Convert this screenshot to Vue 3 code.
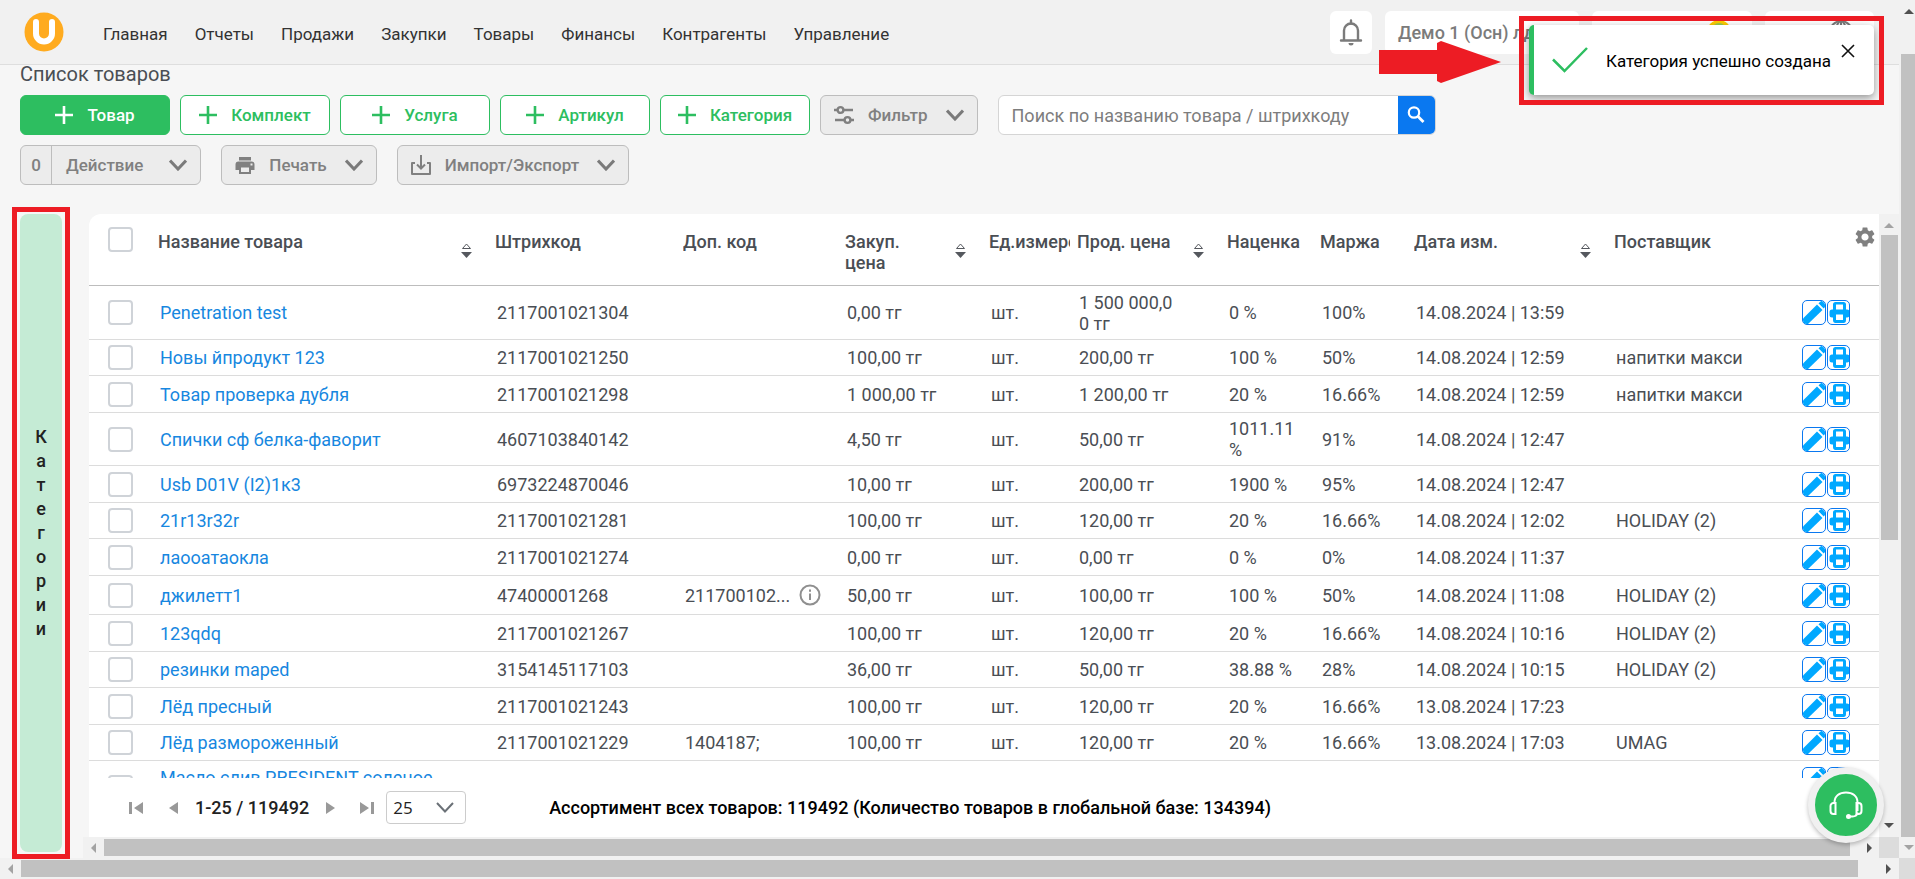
<script setup>
import { ref } from 'vue'

const menu = ['Главная', 'Отчеты', 'Продажи', 'Закупки', 'Товары', 'Финансы', 'Контрагенты', 'Управление']
const addButtons = ['Товар', 'Комплект', 'Услуга', 'Артикул', 'Категория']
const sideLetters = 'Категории'.split('')
const pageSize = ref('25')
const search = ref('')

const columns = [
  { key: 'name', label: 'Название товара', sort: true },
  { key: 'barcode', label: 'Штрихкод' },
  { key: 'extra', label: 'Доп. код' },
  { key: 'buy', label: 'Закуп. цена', sort: true },
  { key: 'unit', label: 'Ед.измере' },
  { key: 'sell', label: 'Прод. цена', sort: true },
  { key: 'markup', label: 'Наценка' },
  { key: 'margin', label: 'Маржа' },
  { key: 'date', label: 'Дата изм.', sort: true },
  { key: 'supplier', label: 'Поставщик' },
]

const fields = ['name', 'barcode', 'extra', 'buy', 'unit', 'sell', 'markup', 'margin', 'date', 'supplier']
const rows = [
  ['Penetration test', '2117001021304', '', '0,00 тг', 'шт.', '1 500 000,0\n0 тг', '0 %', '100%', '14.08.2024 | 13:59', ''],
  ['Новы йпродукт 123', '2117001021250', '', '100,00 тг', 'шт.', '200,00 тг', '100 %', '50%', '14.08.2024 | 12:59', 'напитки макси'],
  ['Товар проверка дубля', '2117001021298', '', '1 000,00 тг', 'шт.', '1 200,00 тг', '20 %', '16.66%', '14.08.2024 | 12:59', 'напитки макси'],
  ['Спички сф белка-фаворит', '4607103840142', '', '4,50 тг', 'шт.', '50,00 тг', '1011.11\n%', '91%', '14.08.2024 | 12:47', ''],
  ['Usb D01V (I2)1к3', '6973224870046', '', '10,00 тг', 'шт.', '200,00 тг', '1900 %', '95%', '14.08.2024 | 12:47', ''],
  ['21r13r32r', '2117001021281', '', '100,00 тг', 'шт.', '120,00 тг', '20 %', '16.66%', '14.08.2024 | 12:02', 'HOLIDAY (2)'],
  ['лаооатаокла', '2117001021274', '', '0,00 тг', 'шт.', '0,00 тг', '0 %', '0%', '14.08.2024 | 11:37', ''],
  ['джилетт1', '47400001268', '211700102...', '50,00 тг', 'шт.', '100,00 тг', '100 %', '50%', '14.08.2024 | 11:08', 'HOLIDAY (2)'],
  ['123qdq', '2117001021267', '', '100,00 тг', 'шт.', '120,00 тг', '20 %', '16.66%', '14.08.2024 | 10:16', 'HOLIDAY (2)'],
  ['резинки maped', '3154145117103', '', '36,00 тг', 'шт.', '50,00 тг', '38.88 %', '28%', '14.08.2024 | 10:15', 'HOLIDAY (2)'],
  ['Лёд пресный', '2117001021243', '', '100,00 тг', 'шт.', '120,00 тг', '20 %', '16.66%', '13.08.2024 | 17:23', ''],
  ['Лёд размороженный', '2117001021229', '1404187;', '100,00 тг', 'шт.', '120,00 тг', '20 %', '16.66%', '13.08.2024 | 17:03', 'UMAG'],
  ['Масло слив PRESIDENT соленое', '', '', '', '', '', '', '', '', ''],
].map((cells) => Object.fromEntries(cells.map((cell, i) => [fields[i], cell])))
</script>

<template>
  <div class="window">
    <div class="page">
      <header class="topbar">
        <a class="logo" href="#" aria-label="Главная страница">
          <svg viewBox="0 0 40 40" width="40" height="40">
            <circle cx="20" cy="20" r="19.5" fill="#ffab1f" />
            <path d="M12 10v11.500a8 8 0 0 0 16 0V10" fill="none" stroke="#fff" stroke-width="6" stroke-linecap="round" />
          </svg>
        </a>
        <nav class="menu">
          <a v-for="item in menu" :key="item" href="#">{{ item }}</a>
        </nav>
        <div class="account">
          <button class="pill bell" aria-label="Уведомления">
            <svg viewBox="0 0 24 28" width="24" height="28" fill="none" stroke="#7b7b7b" stroke-width="2.400">
              <path d="M5 22V12.500a7 7 0 0 1 14 0V22" />
              <path d="M2 22.500h20M12 5.500V2.500" stroke-linecap="round" />
              <path d="M9.500 25h5a2.500 2.500 0 0 1-5 0z" fill="#7b7b7b" stroke="none" />
            </svg>
          </button>
          <button class="pill shop">Демо 1 (Осн) лд</button>
          <button class="pill plan">
            <span>П</span>
            <svg viewBox="0 0 24 24" width="24" height="24">
              <circle cx="12" cy="12" r="12" fill="#ffcc00" />
              <circle cx="12" cy="10" r="7" fill="#9ccc4f" />
            </svg>
          </button>
          <button class="pill lang">
            <span>RU</span>
            <svg viewBox="0 0 24 24" width="24" height="24" fill="none" stroke="#7b7b7b" stroke-width="2">
              <circle cx="12" cy="12" r="11" />
              <ellipse cx="12" cy="12" rx="5" ry="11" />
              <path d="M1 12h22M12 1v22" />
            </svg>
          </button>
        </div>
      </header>

      <h1>Список товаров</h1>

      <div class="toolbar">
        <button v-for="(label, i) in addButtons" :key="label" class="add" :class="{ primary: i === 0 }">
          <svg viewBox="0 0 18 18" width="18" height="18" stroke="currentColor" stroke-width="2.600">
            <path d="M9 0v18M0 9h18" />
          </svg>
          {{ label }}
        </button>
        <button class="tool filter">
          <svg viewBox="0 0 20 20" width="20" height="20" fill="none" stroke="currentColor" stroke-width="2.400">
            <circle cx="6.500" cy="5" r="2.900" />
            <circle cx="13.500" cy="15" r="2.900" />
            <path d="M0 5h3.500M9.500 5H19M1 15h9.500M16.500 15H20" />
          </svg>
          <span>Фильтр</span>
          <svg class="chevron" viewBox="0 0 18 12" width="18" height="12"><path d="M1 1.500l8 8.500 8-8.500" /></svg>
        </button>
        <form class="search" @submit.prevent>
          <input v-model="search" type="text" aria-label="Поиск товара" placeholder="Поиск по названию товара / штрихкоду" />
          <button aria-label="Найти">
            <svg viewBox="0 0 20 20" width="20" height="20" fill="none" stroke="#fff">
              <circle cx="8" cy="7.500" r="5.200" stroke-width="2.200" />
              <path d="M11.800 11.300l5.700 5.700" stroke-width="2.800" />
            </svg>
          </button>
        </form>
      </div>

      <div class="toolbar second">
        <button class="tool action">
          <span class="count">0</span>
          <span>Действие</span>
          <svg class="chevron" viewBox="0 0 18 12" width="18" height="12"><path d="M1 1.500l8 8.500 8-8.500" /></svg>
        </button>
        <button class="tool">
          <svg viewBox="0 0 20 18" width="20" height="18" fill="currentColor">
            <path d="M4 1h12v3.500H4z" />
            <path fill-rule="evenodd" d="M3.500 5.500h13A3 3 0 0 1 19.500 8.500V14H16v4H4v-4H.500V8.500a3 3 0 0 1 3-3zM6 11.500V16h8v-4.500zM15.500 7.500v2h2v-2z" />
          </svg>
          <span>Печать</span>
          <svg class="chevron" viewBox="0 0 18 12" width="18" height="12"><path d="M1 1.500l8 8.500 8-8.500" /></svg>
        </button>
        <button class="tool">
          <svg viewBox="0 0 20 20" width="20" height="20" fill="none" stroke="currentColor" stroke-width="2">
            <path d="M4 8H1v11h18V8h-3" stroke-linejoin="round" />
            <path d="M10 0v13M6 9.500l4 4 4-4" />
          </svg>
          <span>Импорт/Экспорт</span>
          <svg class="chevron" viewBox="0 0 18 12" width="18" height="12"><path d="M1 1.500l8 8.500 8-8.500" /></svg>
        </button>
      </div>

      <main class="workspace">
        <button class="categories" aria-label="Категории">
          <span v-for="(letter, i) in sideLetters" :key="i">{{ letter }}</span>
          <i class="mark"></i>
        </button>

        <section class="list">
          <div class="card">
            <div class="rows">
              <table>
                <colgroup>
                  <col class="c-check" /><col class="c-name" /><col class="c-barcode" /><col class="c-extra" />
                  <col class="c-buy" /><col class="c-unit" /><col class="c-sell" /><col class="c-markup" />
                  <col class="c-margin" /><col class="c-date" /><col class="c-supplier" /><col />
                </colgroup>
                <thead>
                  <tr>
                    <th class="check"><input type="checkbox" aria-label="Выбрать все" /></th>
                    <th v-for="col in columns" :key="col.key">
                      <div class="head" :class="{ sortable: col.sort }">
                        <span>{{ col.label }}</span>
                        <button v-if="col.sort" class="sort" aria-label="Сортировать">
                          <svg viewBox="0 0 11 15" width="11" height="15">
                            <path d="M1.500 5.500L5.500 1l4 4.500z" fill="none" stroke="#55585e" />
                            <path d="M0 9h11l-5.500 6z" fill="#55585e" />
                          </svg>
                        </button>
                      </div>
                    </th>
                    <th class="settings">
                      <button aria-label="Настройка столбцов">
                        <svg viewBox="2 2 20 20" width="20" height="20" fill="#808080">
                          <path d="M19.140 12.940c.04-.3.060-.61.060-.94 0-.32-.02-.64-.07-.94l2.030-1.580a.49.490 0 0 0 .12-.61l-1.920-3.320a.488.488 0 0 0-.59-.22l-2.390.96c-.5-.38-1.030-.7-1.620-.94l-.36-2.540a.484.484 0 0 0-.48-.41h-3.840c-.24 0-.43.17-.47.410l-.36 2.540c-.59.240-1.130.57-1.620.94l-2.390-.96c-.22-.08-.47 0-.59.220L2.740 8.870c-.12.210-.08.470.12.610l2.030 1.580c-.05.300-.09.630-.09.940s.020.640.070.940l-2.030 1.580a.49.490 0 0 0-.12.610l1.920 3.320c.12.220.370.290.590.220l2.390-.96c.5.380 1.030.7 1.620.940l.36 2.540c.05.240.240.410.480.410h3.840c.24 0 .44-.17.470-.41l.36-2.540c.59-.24 1.130-.56 1.620-.94l2.390.96c.22.080.47 0 .59-.22l1.920-3.320c.12-.22.070-.47-.12-.61l-2.010-1.580zM12 15.600c-1.980 0-3.600-1.620-3.600-3.600s1.620-3.600 3.600-3.600 3.600 1.620 3.600 3.600-1.620 3.600-3.600 3.600z" />
                        </svg>
                      </button>
                    </th>
                  </tr>
                </thead>
                <tbody>
                  <tr v-for="row in rows" :key="row.name">
                    <td class="check"><input type="checkbox" :aria-label="row.name" /></td>
                    <td><a href="#">{{ row.name }}</a></td>
                    <td>{{ row.barcode }}</td>
                    <td>
                      <span v-if="row.extra.endsWith('...')" class="more">
                        {{ row.extra }}
                        <button aria-label="Подробнее">
                          <svg viewBox="0 0 22 22" width="22" height="22" fill="none" stroke="#8f8f8f" stroke-width="2">
                            <circle cx="11" cy="11" r="9.500" />
                            <path d="M11 9.500v6.500M11 5.500v2.300" />
                          </svg>
                        </button>
                      </span>
                      <template v-else>{{ row.extra }}</template>
                    </td>
                    <td>{{ row.buy }}</td>
                    <td>{{ row.unit }}</td>
                    <td class="wrap">{{ row.sell }}</td>
                    <td class="wrap">{{ row.markup }}</td>
                    <td>{{ row.margin }}</td>
                    <td>{{ row.date }}</td>
                    <td>{{ row.supplier }}</td>
                    <td class="actions">
                      <div>
                        <button aria-label="Редактировать">
                          <svg viewBox="0 0 23 23" width="23" height="23" fill="#00a8ff">
                            <path d="M14 3.500l5.500 5.500L5 23H0v-5.500z" />
                            <path d="M15.500 2.200L17.600.400a1.500 1.500 0 0 1 2.100 0L22.600 3.300a1.500 1.500 0 0 1 0 2.100l-1.900 2z" />
                          </svg>
                        </button>
                        <button aria-label="Печать ценника">
                          <svg viewBox="0 0 23 23" width="23" height="23" fill="#00a8ff">
                            <path fill-rule="evenodd" d="M5 8.500V3.500Q5 1 7.500 1h8Q18 1 18 3.500v5h1Q21.500 8.500 21.500 11v3q0 2.500-2.500 2.500h-1V19q0 3-2.500 3h-8Q5 22 5 19v-2.500H4Q1.500 16.500 1.500 14v-3Q1.500 8.500 4 8.500zM8 3.500v5h7v-5zM8 13.500V19h7v-5.500z" />
                          </svg>
                        </button>
                      </div>
                    </td>
                  </tr>
                </tbody>
              </table>
            </div>

            <footer class="pager">
              <button aria-label="Первая страница">
                <svg viewBox="0 0 14 12" width="14" height="12"><path d="M0 0h3v12H0zM14 0v12L5 6z" /></svg>
              </button>
              <button class="prev" aria-label="Предыдущая страница">
                <svg viewBox="0 0 9 12" width="9" height="12"><path d="M9 0v12L0 6z" /></svg>
              </button>
              <strong>1-25 / 119492</strong>
              <button class="next" aria-label="Следующая страница">
                <svg viewBox="0 0 9 12" width="9" height="12"><path d="M0 0v12L9 6z" /></svg>
              </button>
              <button class="last" aria-label="Последняя страница">
                <svg viewBox="0 0 14 12" width="14" height="12"><path d="M11 0h3v12h-3zM0 0v12L9 6z" /></svg>
              </button>
              <div class="size">
                <select v-model="pageSize" aria-label="Строк на странице">
                  <option>25</option>
                  <option>50</option>
                </select>
                <svg viewBox="0 0 18 11" width="18" height="11" fill="none" stroke="#6b7177" stroke-width="2"><path d="M1 1l8 8.500L17 1" /></svg>
              </div>
              <p>Ассортимент всех товаров: 119492 (Количество товаров в глобальной базе: 134394)</p>
            </footer>
          </div>

          <div class="track vertical list-v">
            <svg class="arrow dim" viewBox="0 0 10 5" width="10" height="5"><path d="M0 5l5-5 5 5z" /></svg>
            <div class="thumb"></div>
            <svg class="arrow" viewBox="0 0 10 5" width="10" height="5"><path d="M0 0l5 5 5-5z" /></svg>
          </div>
          <div class="track horizontal list-h">
            <svg class="arrow dim" viewBox="0 0 5 10" width="5" height="10"><path d="M5 0L0 5l5 5z" /></svg>
            <div class="thumb"></div>
            <svg class="arrow" viewBox="0 0 5 10" width="5" height="10"><path d="M0 0l5 5-5 5z" /></svg>
          </div>
          <div class="corner"></div>
        </section>
      </main>
    </div>

    <div class="track vertical page-v">
      <svg class="arrow" viewBox="0 0 10 5" width="10" height="5"><path d="M0 5l5-5 5 5z" /></svg>
      <div class="thumb"></div>
      <svg class="arrow dim" viewBox="0 0 10 5" width="10" height="5"><path d="M0 0l5 5 5-5z" /></svg>
    </div>
    <div class="track horizontal page-h">
      <svg class="arrow dim" viewBox="0 0 5 10" width="5" height="10"><path d="M5 0L0 5l5 5z" /></svg>
      <div class="thumb"></div>
      <svg class="arrow" viewBox="0 0 5 10" width="5" height="10"><path d="M0 0l5 5-5 5z" /></svg>
    </div>
    <div class="corner"></div>

    <div class="toast" role="status">
      <svg viewBox="0 0 36 26" width="36" height="26" fill="none" stroke="#2dbe60" stroke-width="2.500"><path d="M1 12.500L12.500 24 35 1" /></svg>
      <span>Категория успешно создана</span>
      <button aria-label="Закрыть">
        <svg viewBox="0 0 14 14" width="14" height="14" stroke="#111" stroke-width="1.600"><path d="M1 1l12 12M13 1L1 13" /></svg>
      </button>
      <i class="mark"></i>
    </div>
    <svg class="pointer" viewBox="0 0 122 42" width="122" height="42"><path d="M0 9h58V2l4-2 60 21-60 21-4-2v-7H0z" fill="#ed1c24" /></svg>

    <button class="support" aria-label="Поддержка">
      <svg viewBox="0 0 34 28" width="34" height="28" fill="none" stroke="#fff" stroke-width="2">
        <path d="M5.500 12V11.500C5.500 5 10.500 1.500 17 1.500S28.500 5 28.500 11.500V20" />
        <path d="M6.500 12v11H4.500A3 3 0 0 1 1.500 20v-5a3 3 0 0 1 3-3zM27.500 12v11h2a3 3 0 0 0 3-3v-5a3 3 0 0 0-3-3z" />
        <path d="M28.500 21.500q-.5 4-5 4H20" />
        <circle cx="19.500" cy="25.500" r="1.500" fill="#fff" />
      </svg>
    </button>
  </div>
</template>

<style>
body {
  margin: 0;
}
</style>

<style scoped>
.window {
  position: relative;
  display: grid;
  grid-template-columns: minmax(0, 1fr) 16px;
  grid-template-rows: minmax(0, 1fr) 21px;
  height: 100vh;
  overflow: hidden;
  background: #f6f6f6;
  font-family: Roboto, 'Liberation Sans', sans-serif;
  font-size: 18px;
  line-height: 21px;
  color: #4a4e54;
}

button,
input,
select {
  font: inherit;
  color: inherit;
}

button {
  margin: 0;
  padding: 0;
  border: 0;
  background: none;
}

svg {
  display: block;
  flex: none;
}

a {
  text-decoration: none;
}

.page {
  display: flex;
  flex-direction: column;
  min-width: 0;
  min-height: 0;
}

.topbar {
  display: flex;
  flex: none;
  align-items: center;
  box-sizing: border-box;
  height: 65px;
  padding: 0 25px 0 24px;
  border-bottom: 1px solid #dedede;
  background: #f1f1f1;
}

.menu {
  display: flex;
  flex: 1;
  gap: 27px;
  margin-left: 39px;
  padding-top: 4px;
  font-size: 17px;
}

.menu a {
  color: #333;
}

.account {
  display: flex;
  gap: 13px;
}

.pill {
  display: flex;
  align-items: center;
  height: 43px;
  border-radius: 6px;
  background: #fff;
  color: #7b7b7b;
  font-weight: 500;
  white-space: nowrap;
}

.bell {
  justify-content: center;
  width: 42px;
}

.shop {
  width: 194px;
  padding-left: 13px;
}

.plan {
  gap: 79px;
  width: 160px;
  padding-left: 23px;
}

.lang {
  gap: 18px;
  width: 109px;
  padding-left: 23px;
}

h1 {
  flex: none;
  margin: -6px 0 0;
  padding: 0 20px;
  font-size: 20px;
  font-weight: 400;
  line-height: 30px;
}

.toolbar {
  display: flex;
  flex: none;
  gap: 10px;
  margin-top: 6px;
  padding: 0 20px;
}

.toolbar.second {
  gap: 20px;
  margin-top: 10px;
}

.add {
  display: flex;
  align-items: center;
  justify-content: center;
  gap: 14px;
  box-sizing: border-box;
  width: 150px;
  height: 40px;
  border: 1px solid #2dbe60;
  border-radius: 6px;
  background: #fff;
  color: #2dbe60;
  font-size: 17px;
  font-weight: 500;
}

.add.primary {
  background: #2dbe60;
  color: #fff;
}

.tool {
  display: flex;
  align-items: center;
  gap: 14px;
  box-sizing: border-box;
  height: 40px;
  padding: 0 13px;
  border: 1px solid #bdbdbd;
  border-radius: 6px;
  background: #ececec;
  color: #808080;
  font-size: 17px;
  font-weight: 500;
}

.tool .chevron {
  margin-left: 4px;
}

.tool.action {
  padding-left: 0;
}

.tool.action .chevron {
  margin-left: 12px;
}

.chevron {
  fill: none;
  stroke: #7a7a7a;
  stroke-width: 3;
}

.count {
  align-self: stretch;
  width: 30px;
  border-right: 1px solid #bdbdbd;
  line-height: 38px;
  text-align: center;
}

.search {
  display: flex;
  box-sizing: border-box;
  width: 438px;
  height: 40px;
  margin-left: 10px;
  border: 1px solid #d5d5d5;
  border-radius: 6px;
  background: #fff;
  overflow: hidden;
}

.search input {
  flex: 1;
  min-width: 0;
  padding: 1px 13px 0;
  border: 0;
  background: none;
  outline: none;
}

.search input::placeholder {
  color: #7d7d7d;
  opacity: 1;
}

.search button {
  display: flex;
  align-items: center;
  justify-content: center;
  width: 37px;
  background: #0a78f0;
}

.workspace {
  display: flex;
  flex: 1;
  gap: 21px;
  min-height: 0;
  margin-top: 29px;
  padding-left: 20px;
}

.categories {
  position: relative;
  display: flex;
  flex: none;
  flex-direction: column;
  align-items: center;
  justify-content: center;
  width: 42px;
  margin-bottom: 6px;
  border-radius: 8px;
  background: #c5ebd5;
  color: #222;
  font-weight: 500;
  line-height: 24px;
}

.mark {
  position: absolute;
  border: 5px solid #ed1c24;
  pointer-events: none;
}

.categories .mark {
  inset: -7px -8px;
}

.list {
  display: grid;
  flex: 1;
  grid-template-columns: minmax(0, 1fr) 20px;
  grid-template-rows: minmax(0, 1fr) 21px;
  min-width: 0;
}

.card {
  display: flex;
  flex-direction: column;
  min-height: 0;
  margin-left: 6px;
  border-top-left-radius: 12px;
  background: #fff;
  overflow: hidden;
}

.rows {
  flex: 1;
  min-height: 0;
  overflow: hidden;
}

table {
  width: 100%;
  table-layout: fixed;
  border-collapse: separate;
  border-spacing: 0;
}

.c-check { width: 66px; }
.c-name { width: 337px; }
.c-barcode { width: 188px; }
.c-extra { width: 162px; }
.c-buy { width: 144px; }
.c-unit { width: 88px; }
.c-sell { width: 150px; }
.c-markup { width: 93px; }
.c-margin { width: 94px; }
.c-date { width: 200px; }
.c-supplier { width: 186px; }

th {
  box-sizing: border-box;
  height: 72px;
  padding: 17px 4px 0 3px;
  border-bottom: 1px solid #bdbdbd;
  font-weight: 500;
  text-align: left;
  vertical-align: top;
}

.head {
  display: flex;
  justify-content: space-between;
  overflow: hidden;
}

.head.sortable {
  padding-right: 16px;
}

.head.sortable span {
  max-width: calc(100% - 26px);
}

.sort {
  margin-top: 12px;
  align-self: flex-start;
}

.settings {
  padding: 13px 4px 0 0;
}

.settings button {
  display: block;
  margin-left: auto;
}

td {
  box-sizing: border-box;
  height: 37px;
  padding: 0 0 0 5px;
  border-bottom: 1px solid #dcdcdc;
  vertical-align: middle;
  white-space: nowrap;
}

tbody tr:nth-child(even) td {
  height: 36px;
}

tbody tr:first-child td {
  height: 54px;
}

td.wrap {
  padding-top: 5px;
  padding-bottom: 5px;
  white-space: pre-line;
}

tbody tr:last-child td {
  height: 53px;
  padding-bottom: 16px;
}

tbody tr:last-child td:nth-child(2) {
  padding-bottom: 20px;
}

td a {
  color: #1787e0;
}

.check,
tbody tr td.check {
  padding: 0 0 0 19px;
}

th.check {
  padding-top: 13px;
}

.check input {
  display: block;
  appearance: none;
  box-sizing: border-box;
  width: 25px;
  height: 25px;
  margin: 0;
  border: 2px solid #cfd3d8;
  border-radius: 4px;
  background: #fff;
}

.more {
  display: flex;
  align-items: center;
  justify-content: space-between;
  height: 38px;
  padding-right: 21px;
}

.actions div {
  display: flex;
  justify-content: flex-end;
  gap: 1px;
  padding-right: 29px;
}

.actions button {
  border: 1px solid #0a78f0;
  border-radius: 5px;
  overflow: hidden;
}

.pager {
  display: flex;
  flex: none;
  align-items: center;
  height: 59px;
  padding: 0 20px 0 40px;
  color: #222;
}

.pager button {
  fill: #999;
}

.prev {
  margin-left: 26px;
}

.pager strong {
  margin-left: 17px;
  font-weight: 500;
}

.next {
  margin-left: 17px;
}

.last {
  margin-left: 25px;
}

.size {
  position: relative;
  margin-left: 12px;
}

.size select {
  display: block;
  appearance: none;
  box-sizing: border-box;
  width: 80px;
  height: 33px;
  padding: 0 6px;
  border: 1px solid #ccc;
  border-radius: 4px;
  background: #fff;
  font-family: 'Open Sans', sans-serif;
  font-size: 17px;
}

.size svg {
  position: absolute;
  top: 11px;
  right: 12px;
  pointer-events: none;
}

.pager p {
  margin: 0 0 0 83px;
  color: #000;
  font-weight: 500;
}

.track {
  display: flex;
  align-items: center;
  background: #f1f1f1;
}

.vertical {
  flex-direction: column;
}

.thumb {
  background: #c1c1c1;
}

.vertical .thumb {
  align-self: stretch;
  margin: 0 1px 0 2px;
}

.horizontal .thumb {
  align-self: stretch;
  margin: 2px 0;
}

.arrow {
  fill: #505050;
}

.arrow.dim {
  fill: #a3a3a3;
}

.list-v .arrow:first-child {
  margin: 9px 0 7px;
}

.list-v .thumb {
  flex: 0 0 49%;
}

.list-v .arrow:last-child {
  margin: auto 0 9px;
}

.list-h .arrow:first-child {
  margin: 0 8px;
}

.list-h .thumb {
  flex: 1;
}

.list-h .arrow:last-child {
  margin: 0 7px 0 17px;
}

.page-v .arrow:first-child {
  margin: 9px 0 40px 4px;
}

.page-v .thumb {
  flex: 1;
  margin-right: 0;
}

.page-v .arrow:last-child {
  margin: 8px 0 8px 4px;
}

.page-h .arrow:first-child {
  margin: 0 8px;
}

.page-h .thumb {
  flex: 1;
}

.page-h .arrow:last-child {
  margin: 0 8px 0 28px;
}

.corner {
  background: #dcdcdc;
}

.toast {
  position: absolute;
  top: 25px;
  right: 41px;
  display: flex;
  align-items: center;
  box-sizing: border-box;
  width: 345px;
  height: 70px;
  padding-left: 18px;
  border-left: 5px solid #2dbe60;
  border-radius: 5px;
  background: #fff;
  box-shadow: 0 3px 8px rgba(0, 0, 0, 0.4);
  color: #000;
  font-size: 17px;
  white-space: nowrap;
}

.toast span {
  margin-left: 18px;
  padding-top: 2px;
}

.toast button {
  position: absolute;
  top: 19px;
  right: 19px;
}

.toast .mark {
  inset: -9px -10px -10px -15px;
}

.pointer {
  position: absolute;
  top: 41px;
  right: 414px;
}

.support {
  position: absolute;
  right: 31px;
  bottom: 36px;
  display: flex;
  align-items: center;
  justify-content: center;
  box-sizing: border-box;
  width: 76px;
  height: 76px;
  border: 7px solid #f0f0f0;
  border-radius: 50%;
  background: #2dbe60;
  box-shadow: 0 2px 4px rgba(0, 0, 0, 0.25);
}
</style>
